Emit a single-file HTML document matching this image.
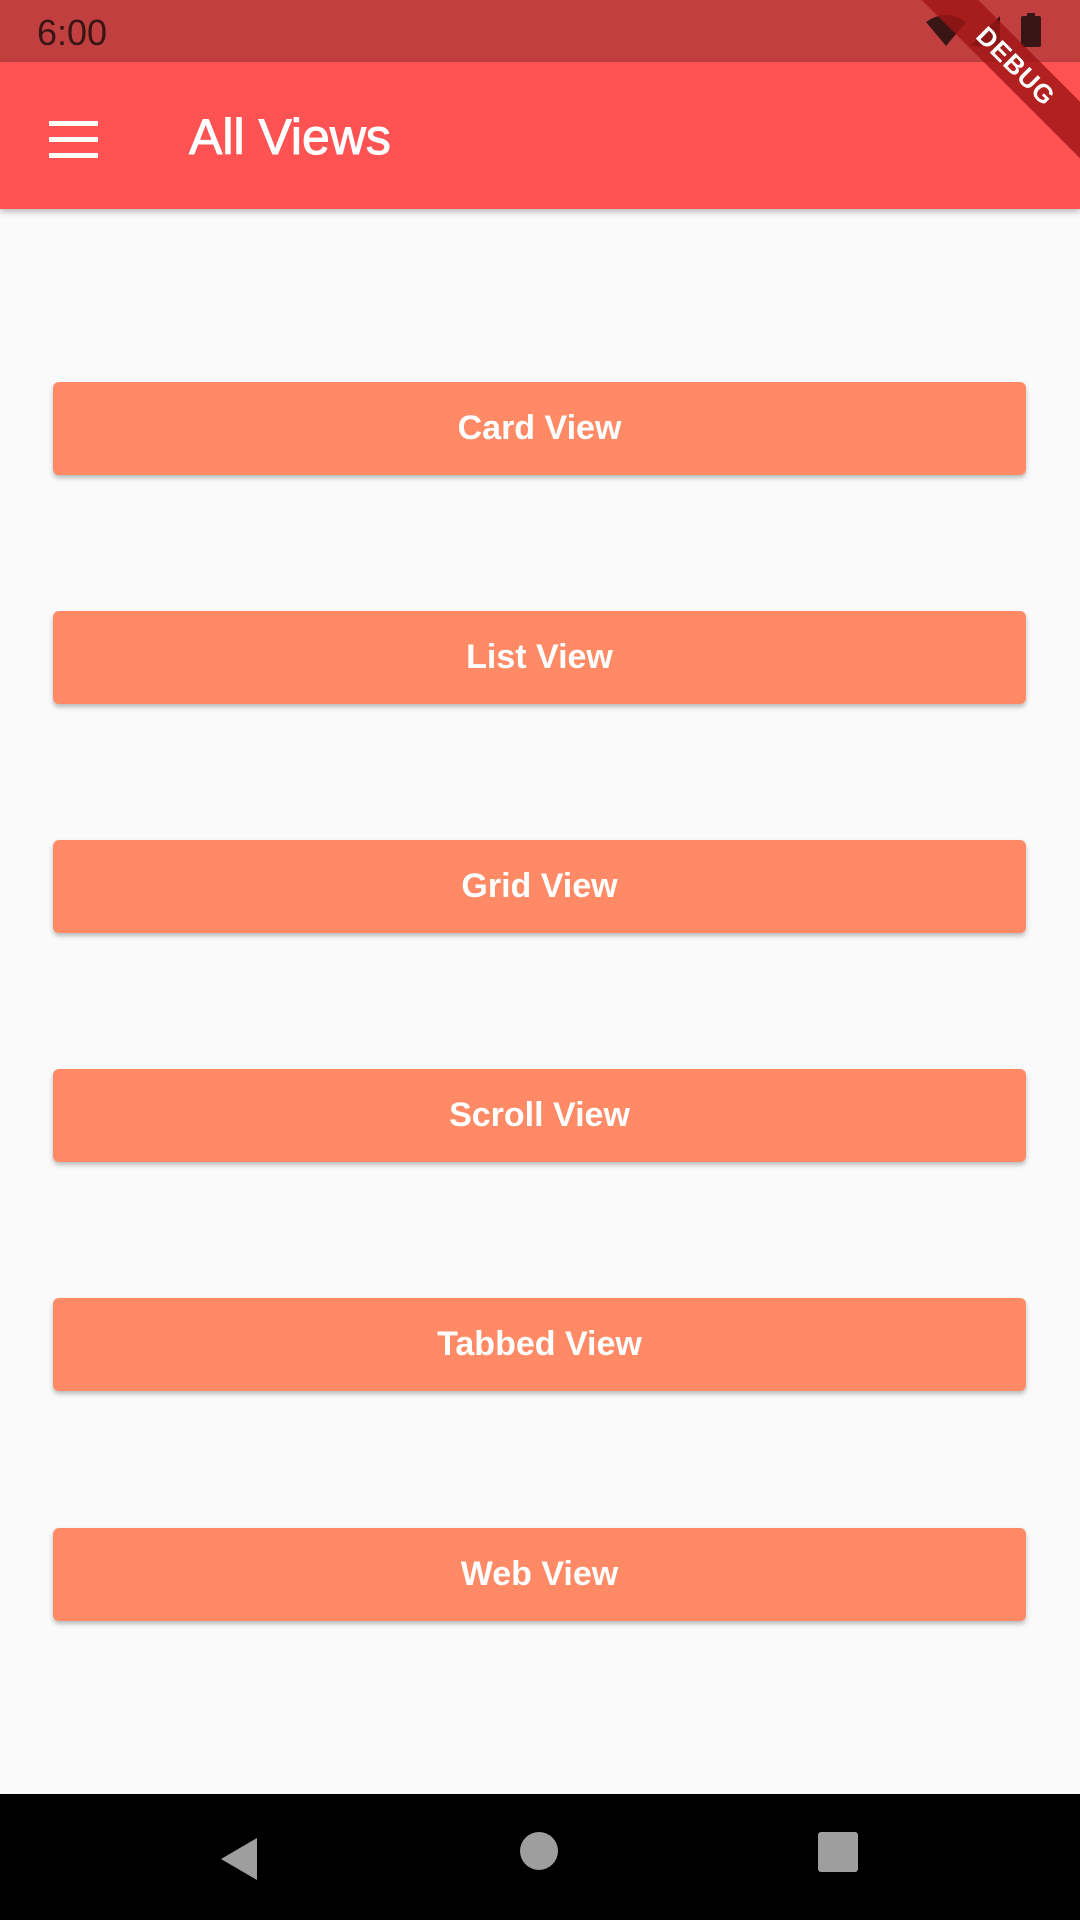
<!DOCTYPE html>
<html><head><meta charset="utf-8"><style>
body{margin:0;width:1080px;height:1920px;background:#FAFAFA;position:relative;overflow:hidden;font-family:"Liberation Sans",Roboto,sans-serif}
.status{position:absolute;left:0;top:0;width:1080px;height:62px;background:#C13F3F}
.time{position:absolute;left:37px;top:12px;font-size:36px;color:#3a1515}
.appbar{position:absolute;left:0;top:62px;width:1080px;height:147px;background:#FF5252;box-shadow:0 3px 6px rgba(0,0,0,.25)}
.title{position:absolute;left:189px;top:46px;font-size:50px;color:#fff;font-weight:500;-webkit-text-stroke:1px #fff}
.menu{position:absolute;left:49px;top:59px;width:49px}
.menu div{height:5px;background:#fff;margin-bottom:11px}
.btn{position:absolute;left:53px;width:973px;height:93px;background:#FF8A65;border-radius:6px;box-shadow:0 3px 5px rgba(0,0,0,.25);color:#fff;font-size:34px;font-weight:bold;text-align:center;line-height:93px}
.nav{position:absolute;left:0;top:1794px;width:1080px;height:126px;background:#000}
.ribbon{position:absolute;right:-86px;top:46px;width:300px;height:40px;background:rgba(160,20,20,.8);transform:rotate(45deg);color:#fff;font-weight:bold;font-size:26px;text-align:center;line-height:40px;letter-spacing:1px}
</style></head><body>
<div class="status"><div class="time">6:00</div>
<svg style="position:absolute;left:924px;top:14px" width="44" height="32"><path d="M2 8 Q22 -6 42 8 L22 32Z" fill="#3a1515"/></svg>
<svg style="position:absolute;left:970px;top:14px" width="32" height="32"><path d="M30 2 L30 32 L0 32Z" fill="#3a1515"/></svg>
<svg style="position:absolute;left:1021px;top:13px" width="20" height="34"><rect x="6" y="0" width="8" height="4" fill="#3a1515"/><rect x="0" y="3" width="20" height="31" rx="2" fill="#3a1515"/></svg>
</div>
<div class="appbar"><div class="menu"><div></div><div></div><div></div></div><div class="title">All Views</div></div>
<div class="ribbon">DEBUG</div>
<div class="btn" style="top:382px">Card View</div>
<div class="btn" style="top:611px">List View</div>
<div class="btn" style="top:840px">Grid View</div>
<div class="btn" style="top:1069px">Scroll View</div>
<div class="btn" style="top:1298px">Tabbed View</div>
<div class="btn" style="top:1528px">Web View</div>
<div class="nav">
<svg style="position:absolute;left:219px;top:42px" width="40" height="46"><path d="M38 2 L38 44 L2 23Z" fill="#9e9e9e"/></svg>
<div style="position:absolute;left:520px;top:38px;width:38px;height:38px;border-radius:50%;background:#9e9e9e"></div>
<div style="position:absolute;left:818px;top:38px;width:40px;height:40px;border-radius:3px;background:#9e9e9e"></div>
</div>
</body></html>
